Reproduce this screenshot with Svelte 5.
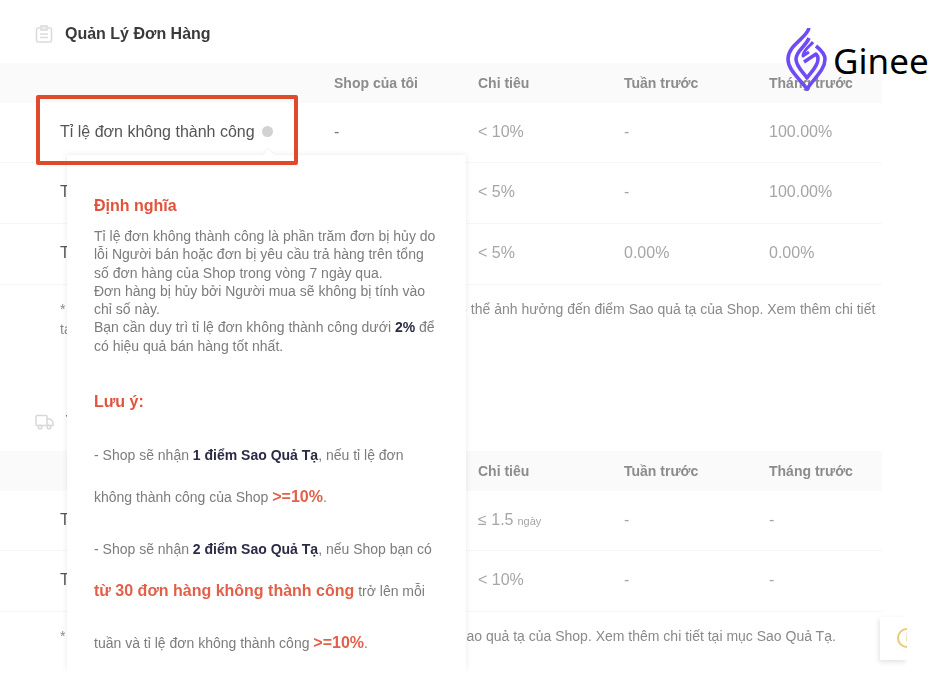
<script>
  const columns = ['', 'Shop của tôi', 'Chỉ tiêu', 'Tuần trước', 'Tháng trước'];

  const orderRows = [
    { id: 'fail', label: 'Tỉ lệ đơn không thành công', info: true, mine: '-', goal: '< 10%', week: '-', month: '100.00%' },
    { id: 'cancel', label: 'Tỉ lệ hủy đơn', mine: '-', goal: '< 5%', week: '-', month: '100.00%' },
    { id: 'return', label: 'Tỉ lệ Trả hàng/Hoàn tiền', mine: '-', goal: '< 5%', week: '0.00%', month: '0.00%' }
  ];

  const shipRows = [
    { id: 'prep', label: 'Thời gian chuẩn bị hàng', mine: '-', goal: '≤ 1.5', unit: 'ngày', week: '-', month: '-' },
    { id: 'late', label: 'Tỉ lệ giao hàng trễ', mine: '-', goal: '< 10%', week: '-', month: '-' }
  ];
</script>

{#snippet table(rows)}
  <div class="row head-row">
    {#each columns as col}
      <div>{col}</div>
    {/each}
  </div>
  {#each rows as row (row.id)}
    <div class="row">
      <div class="label">
        {row.label}
        {#if row.info}<span class="dot"></span>{/if}
      </div>
      <div>{row.mine}</div>
      <div class="muted">{row.goal}{#if row.unit}<small>{row.unit}</small>{/if}</div>
      <div class="muted">{row.week}</div>
      <div class="muted">{row.month}</div>
    </div>
  {/each}
{/snippet}

<div class="page">
  <div class="content">
    <section>
      <h2 class="title first">
        <svg width="18" height="18" viewBox="0 0 18 18" fill="none" stroke="#dcdcdc" stroke-width="1.6">
          <rect x="1.5" y="3" width="15" height="14" rx="1.5" />
          <rect x="6" y="1" width="6" height="4" fill="#eee" />
          <path d="M5 9h8M5 12.5h8" />
        </svg>
        Quản Lý Đơn Hàng
      </h2>
      {@render table(orderRows)}
      <p class="note"><span class="star">*</span> Tỉ lệ đơn không thành công và Tỉ lệ giao hàng trễ ở mức cao có thể ảnh hưởng đến điểm Sao quả tạ của Shop. Xem thêm chi tiết<br />tại mục Sao Quả Tạ.</p>
    </section>

    <section>
      <h2 class="title">
        <svg width="19" height="16" viewBox="0 0 19 16" fill="none" stroke="#d8d8d8" stroke-width="1.5">
          <rect x="1" y="1.5" width="11" height="10" rx="1" />
          <path d="M12 5h3.5l2.5 3v3.5h-6" />
          <circle cx="5" cy="13" r="1.8" />
          <circle cx="14" cy="13" r="1.8" />
        </svg>
        Vận Chuyển
      </h2>
      {@render table(shipRows)}
      <p class="note"><span class="star">*</span> Tỉ lệ giao hàng trễ của Shop cao có thể ảnh hưởng đến điểm Sao quả tạ của Shop. Xem thêm chi tiết tại mục Sao Quả Tạ.</p>
    </section>

    <div class="popover">
      <span class="arrow"></span>
      <h3 class="define">Định nghĩa</h3>
      <p class="define-text">
        Tỉ lệ đơn không thành công là phần trăm đơn bị hủy do<br />
        lỗi Người bán hoặc đơn bị yêu cầu trả hàng trên tổng<br />
        số đơn hàng của Shop trong vòng 7 ngày qua.<br />
        Đơn hàng bị hủy bởi Người mua sẽ không bị tính vào<br />
        chỉ số này.<br />
        Bạn cần duy trì tỉ lệ đơn không thành công dưới <b>2%</b> để<br />
        có hiệu quả bán hàng tốt nhất.
      </p>
      <h3 class="warn">Lưu ý:</h3>
      <div class="tip">- Shop sẽ nhận <b>1 điểm Sao Quả Tạ</b>, nếu tỉ lệ đơn</div>
      <div class="tip">không thành công của Shop <em>&gt;=10%</em>.</div>
      <div class="tip gap">- Shop sẽ nhận <b>2 điểm Sao Quả Tạ</b>, nếu Shop bạn có</div>
      <div class="tip"><em class="big">từ 30 đơn hàng không thành công</em> trở lên mỗi</div>
      <div class="tip gap">tuần và tỉ lệ đơn không thành công <em>&gt;=10%</em>.</div>
    </div>

    <div class="highlight"></div>

    <div class="float-btn">
      <span class="coin">i</span>
    </div>
  </div>

  <div class="logo">
    <svg width="42" height="64" viewBox="0 0 42 64" fill="none" stroke="#6f4bf6" stroke-width="3.6" stroke-linejoin="round">
      <path d="M23 0 C21 10 2 17 2 31 C2 42 13 50 21 61 C28 50 39 42 39 31 C39 26 35 22 30 18" />
      <path d="M23 10 C20 18 10 23 10 31 C10 38 16 43 21 50 C26 43 32 38 32 31 C32 29 31 27 30 26 L18 34" />
      <path d="M27 14 C24 18 17 22 17 28 L23 24" stroke-width="3" />
    </svg>
    <span>Ginee</span>
  </div>
</div>

<style>
  :global(body) {
    margin: 0;
    background: #fff;
  }

  .page {
    position: relative;
    width: 940px;
    height: 689px;
    overflow: hidden;
    font-family: "Liberation Sans", Arial, sans-serif;
  }

  .content {
    position: relative;
    height: 100%;
    filter: blur(0.7px);
  }

  section {
    width: 882px;
  }

  .title {
    display: flex;
    align-items: center;
    gap: 12px;
    height: 58px;
    margin: 0;
    padding-left: 35px;
    box-sizing: border-box;
    font-size: 16px;
    font-weight: 700;
    color: #3a3a3a;
  }

  .title.first {
    height: 63px;
    padding-top: 5px;
  }

  .row {
    display: grid;
    grid-template-columns: 334px 144px 146px 145px 113px;
    align-items: center;
    height: 61px;
    padding-bottom: 2px;
    box-sizing: border-box;
    border-bottom: 1px solid #f6f6f6;
    font-size: 16px;
    color: #777;
  }

  .row > div:first-child {
    padding-left: 60px;
  }

  .row:nth-child(3) {
    height: 60px;
  }

  .head-row {
    height: 40px;
    padding-bottom: 0;
    border-bottom: 0;
    background: #fafafa;
    font-size: 14px;
    font-weight: 700;
    color: #8c8c8c;
  }

  .label {
    display: flex;
    align-items: center;
    gap: 7px;
    white-space: nowrap;
    color: #555;
  }

  .dot {
    width: 11px;
    height: 11px;
    border-radius: 50%;
    background: #d2d2d2;
  }

  .muted {
    color: #a6a6a6;
  }

  small {
    margin-left: 4px;
    font-size: 11px;
  }

  .note {
    height: 108px;
    margin: 0;
    padding: 15px 0 0 60px;
    box-sizing: border-box;
    white-space: nowrap;
    font-size: 14px;
    line-height: 19.5px;
    color: #8a8a8a;
  }

  .star {
    margin-right: 3px;
  }

  section + section .note {
    height: 60px;
  }

  section + section .star {
    margin-right: 6px;
  }

  .popover {
    position: absolute;
    top: 155px;
    left: 67px;
    width: 399px;
    height: 515px;
    padding: 41px 0 0 27px;
    box-sizing: border-box;
    background: #fff;
    box-shadow: 0 0 6px rgba(0, 0, 0, 0.09);
    clip-path: inset(-12px -12px 0 -12px);
    white-space: nowrap;
    font-size: 14px;
    color: #7c7c7c;
  }

  .arrow {
    position: absolute;
    top: -4px;
    left: 197px;
    width: 9px;
    height: 9px;
    background: #fff;
    transform: rotate(45deg);
    box-shadow: -1px -1px 2px rgba(0, 0, 0, 0.05);
  }

  h3 {
    margin: 0;
    font-size: 16px;
    line-height: 20px;
    color: #e0533c;
  }

  .define-text {
    margin: 11px 0 0;
    line-height: 18.3px;
  }

  .warn {
    margin-top: 37px;
  }

  .tip {
    line-height: 42px;
  }

  .warn + .tip {
    margin-top: 22px;
  }

  .tip.gap {
    margin-top: 10px;
  }

  b {
    color: #2b2b46;
  }

  em {
    font-style: normal;
    font-weight: 700;
    font-size: 16px;
    color: #e2604a;
  }

  .highlight {
    position: absolute;
    top: 95px;
    left: 36px;
    width: 262px;
    height: 70px;
    box-sizing: border-box;
    border: 4px solid #e04a2c;
    border-radius: 2px;
  }

  .float-btn {
    position: absolute;
    top: 617px;
    left: 880px;
    width: 27px;
    height: 43px;
    overflow: hidden;
    background: #fff;
    box-shadow: -1px 2px 5px rgba(0, 0, 0, 0.12);
    clip-path: inset(-8px 0 -8px -8px);
  }

  .coin {
    position: absolute;
    top: 11px;
    left: 17px;
    width: 20px;
    height: 20px;
    box-sizing: border-box;
    border: 2.5px solid #ecc87c;
    border-radius: 50%;
    text-align: center;
    font-size: 11px;
    line-height: 15px;
    color: #ecc87c;
  }

  .logo {
    position: absolute;
    top: 28px;
    left: 786px;
    display: flex;
    gap: 5px;
  }

  .logo svg {
    display: block;
  }

  .logo span {
    margin-top: 13px;
    font-family: "Noto Sans", sans-serif;
    font-size: 35px;
    line-height: 40px;
    color: #000;
  }
</style>
